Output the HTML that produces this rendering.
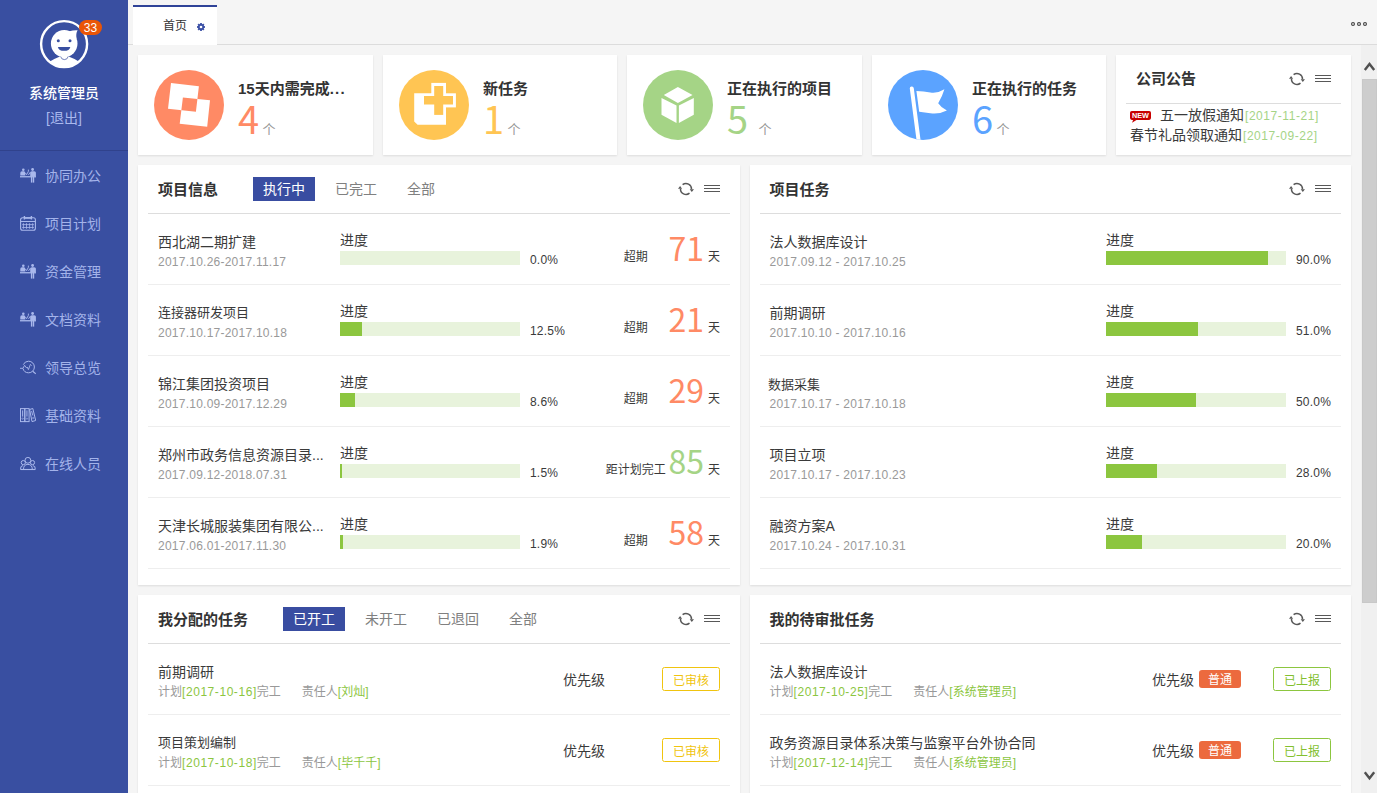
<!DOCTYPE html>
<html lang="zh-CN">
<head>
<meta charset="utf-8">
<title>首页</title>
<style>
*{box-sizing:border-box;margin:0;padding:0}
html,body{width:1377px;height:793px;overflow:hidden}
body{position:relative;background:#f5f5f5;font-family:"Liberation Sans","Noto Sans CJK SC",sans-serif;font-size:14px;color:#333;line-height:1}
.abs{position:absolute}
/* sidebar */
#side{position:absolute;left:0;top:0;width:128px;height:793px;background:#394fa1;color:#fff}
#side .uname{position:absolute;left:0;width:128px;top:83px;text-align:center;font-size:14px;line-height:20px;font-weight:500;color:#fff}
#side .logout{position:absolute;left:0;width:128px;top:108px;text-align:center;font-size:14px;line-height:20px;color:#a9b9ee}
#side .hr{position:absolute;left:0;top:150px;width:128px;height:1px;background:#30428c}
#side .mi{position:absolute;left:0;width:128px;height:48px;color:#a3b3ea;font-size:14px;line-height:48px;padding-left:45px}
#side .mi svg{position:absolute;left:20px;top:16px}
.badge{position:absolute;left:79px;top:20px;width:23px;height:15px;border-radius:8px;background:#ea5506;color:#fff;font-size:12px;line-height:17px;text-align:center}
/* top tab bar */
#tabbar{position:absolute;left:128px;top:0;width:1249px;height:45px;border-bottom:1px solid #dcdcdc;background:#f5f5f5}
#tab{position:absolute;left:133px;top:5px;width:84px;height:40px;background:#fff;border-top:2px solid #2f4398}
#tab span{position:absolute;left:30px;top:12px;font-size:12px;line-height:14px;color:#333}
/* cards */
.card{position:absolute;top:55px;height:100px;background:#fff;box-shadow:0 1px 2px rgba(0,0,0,.1)}
.card .ico{position:absolute;left:16px;top:15px;width:70px;height:70px}
.card .t{position:absolute;left:100px;top:24px;font-size:15px;line-height:20px;font-weight:bold;color:#333;white-space:nowrap}
.card .n{position:absolute;left:100px;top:41px;font-family:"Noto Sans CJK SC","Liberation Sans",sans-serif;font-weight:400;font-size:38px;line-height:44px}
.card .u{position:absolute;top:68px;font-size:13px;line-height:14px;color:#999}
/* panels */
.panel{position:absolute;background:#fff;box-shadow:0 1px 2px rgba(0,0,0,.1)}
.panel .hd{position:absolute;left:10px;right:10px;top:0;height:49px;border-bottom:1px solid #ddd}
.panel .hd .tt{position:absolute;left:10px;top:15px;font-size:15px;line-height:20px;font-weight:bold;color:#333;white-space:nowrap}
.tabs{position:absolute;top:12px;height:24px;white-space:nowrap;font-size:0}
.tabs span{display:inline-block;height:24px;line-height:24px;padding:0 10px;margin-right:10px;font-size:14px;color:#808080}
.tabs span.on{background:#394da1;color:#fff}
.tools{position:absolute;right:10px;top:16px;width:44px;height:16px}
.row{position:absolute;left:10px;right:10px;height:71px;border-bottom:1px solid #eee}
.row .nm{position:absolute;left:10px;top:18px;font-size:14px;line-height:20px;color:#3a3a3a;white-space:nowrap}
.row .dt{position:absolute;left:10px;top:40px;font-size:12px;line-height:16px;color:#999;white-space:nowrap;letter-spacing:.24px}
.row .jd{position:absolute;top:16px;font-size:14px;line-height:20px;color:#3a3a3a}
.row .bar{position:absolute;top:37px;width:180px;height:14px;background:#e8f3dc}
.row .bar i{display:block;height:14px;background:#8cc63f}
.row .pc{position:absolute;top:38px;font-size:12px;line-height:16px;color:#3a3a3a;letter-spacing:.2px}
.row .st{position:absolute;left:437.3px;width:101px;text-align:center;top:35px;font-size:12px;line-height:16px;color:#3a3a3a;white-space:nowrap}
.row .dn{position:absolute;right:26px;top:13px;font-family:"Noto Sans CJK SC","Liberation Sans",sans-serif;font-weight:400;font-size:32px;line-height:40px;text-align:right}
.row .dy{position:absolute;right:10px;top:35px;font-size:12px;line-height:16px;color:#3a3a3a}
.row .sub{position:absolute;left:10px;top:40px;font-size:12px;line-height:16px;color:#999;white-space:nowrap}
.row .sub b{font-weight:normal;color:#8cc63f}
.row .sub b.d{letter-spacing:.56px}
.row .sub em{font-style:normal;margin-left:21px}
.row .pr{position:absolute;top:26px;font-size:14px;line-height:20px;color:#3a3a3a}
.row .btn{position:absolute;right:10px;top:23px;width:58px;height:24px;border:1px solid #f0c40f;border-radius:2.5px;color:#f0c40f;font-size:12px;line-height:22px;padding-top:1.5px;text-align:center}
.row .btn.g{border-color:#8cc63f;color:#83c02f}
.row .tag{position:absolute;top:26px;width:42px;height:18px;background:#ec6a3e;border-radius:3px;color:#fff;font-size:12px;line-height:18px;padding-top:1px;text-align:center}
.orange{color:#ff8a65}.green{color:#a5d486}.yellow{color:#ffc553}.blue{color:#5ba3ff}
.nt{position:absolute;font-size:14px;line-height:20px;color:#3a3a3a;white-space:nowrap}
.nt b{font-weight:normal;color:#a5d486;font-size:12px;letter-spacing:.55px;margin-left:1px}
.rp .nm,.rp .dt,.rp .sub,.rp .tt{margin-left:-.5px}
/* scrollbar */
#sb{position:absolute;left:1361px;top:45px;width:16px;height:748px;background:#f0f0f0}
#sb .th{position:absolute;left:1px;top:34px;width:15px;height:524px;background:#cdcdcd;border:1px solid #c8c8c8}
</style>
</head>
<body>

<div id="side">
  <svg class="abs" style="left:38px;top:18px" width="52" height="52" viewBox="38 18 52 52">
    <defs><clipPath id="cav"><circle cx="64.1" cy="44.1" r="22.5"/></clipPath></defs>
    <circle cx="64.1" cy="44.1" r="23" fill="none" stroke="#fff" stroke-width="2.4"/>
    <g clip-path="url(#cav)" fill="#fff">
      <ellipse cx="64.2" cy="43.6" rx="13.3" ry="13.5"/>
      <path d="M68.5,31.5 Q74,30 77.6,30.3 Q75.6,33.5 76.6,39 Z"/>
      <path d="M49,62 Q56,58 60.5,56.3 L68,56.3 Q73,58 79.5,62 L79.5,70 L49,70 Z"/>
    </g>
    <circle cx="58.3" cy="40.8" r="1.5" fill="#394fa1"/>
    <circle cx="70" cy="40.8" r="1.5" fill="#394fa1"/>
    <path d="M57.9,46.9 L70.3,46.9 Q69.5,50.8 64.1,50.8 Q58.7,50.8 57.9,46.9 Z" fill="#394fa1"/>
    <path d="M60.7,56.6 Q61.3,59.6 64.4,59.6 Q67.5,59.6 68.1,56.6" fill="none" stroke="#394fa1" stroke-width=".7"/>
  </svg>
  <div class="badge">33</div>
  <div class="uname">系统管理员</div>
  <div class="logout">[退出]</div>
  <div class="hr"></div>
  <div class="mi" style="top:152px"><svg width="16" height="16" viewBox="0 0 16 16" fill="#a9b8ec"><circle cx="3.3" cy="1.7" r="1.3"/><path d="M.3,7.6V5.1Q.3,3.2 2,3.2H3.8Q5.3,3.2 5.3,5.1V7.6Z"/><rect x="0" y="8.1" width="16" height="1.3"/><circle cx="12.6" cy="1.5" r="1.4"/><path d="M10.2,8.2V4.8Q10.2,3.2 11.8,3.2H14.2Q15.9,3.2 15.9,4.8V8.2Z"/><rect x="10.9" y="8" width="1.4" height="6.6"/><rect x="12.8" y="8" width="1.4" height="6.6"/><path d="M5.3,4.9L6.6,6.7 8.4,3.3V1.6M8.5,6.9L10.3,4.2" fill="none" stroke="#a9b8ec" stroke-width=".9"/></svg>协同办公</div>
  <div class="mi" style="top:200px"><svg width="16" height="16" viewBox="0 0 16 16" fill="none" stroke="#a9b8ec"><rect x=".6" y="1.7" width="14.8" height="12.6" rx="2" stroke-width="1.1"/><path d="M.6,5.5H15.4" stroke-width="1"/><path d="M4.4,2H11.4" stroke-width="1.6"/><path d="M4.4,0V3.6M11.4,0V3.6" stroke-width="1.4"/><path d="M3.4,7.2V12.8M6.5,7.2V12.8M9.6,7.2V12.8M12.7,7.2V12.8M2.2,8.6H13.9M2.2,11.5H13.9" stroke-width=".8"/></svg>项目计划</div>
  <div class="mi" style="top:248px"><svg width="16" height="16" viewBox="0 0 16 16" fill="#a9b8ec"><circle cx="3.3" cy="1.7" r="1.3"/><path d="M.3,7.6V5.1Q.3,3.2 2,3.2H3.8Q5.3,3.2 5.3,5.1V7.6Z"/><rect x="0" y="8.1" width="16" height="1.3"/><circle cx="12.6" cy="1.5" r="1.4"/><path d="M10.2,8.2V4.8Q10.2,3.2 11.8,3.2H14.2Q15.9,3.2 15.9,4.8V8.2Z"/><rect x="10.9" y="8" width="1.4" height="6.6"/><rect x="12.8" y="8" width="1.4" height="6.6"/><path d="M5.3,4.9L6.6,6.7 8.4,3.3V1.6M8.5,6.9L10.3,4.2" fill="none" stroke="#a9b8ec" stroke-width=".9"/></svg>资金管理</div>
  <div class="mi" style="top:296px"><svg width="16" height="16" viewBox="0 0 16 16" fill="#a9b8ec"><circle cx="3.3" cy="1.7" r="1.3"/><path d="M.3,7.6V5.1Q.3,3.2 2,3.2H3.8Q5.3,3.2 5.3,5.1V7.6Z"/><rect x="0" y="8.1" width="16" height="1.3"/><circle cx="12.6" cy="1.5" r="1.4"/><path d="M10.2,8.2V4.8Q10.2,3.2 11.8,3.2H14.2Q15.9,3.2 15.9,4.8V8.2Z"/><rect x="10.9" y="8" width="1.4" height="6.6"/><rect x="12.8" y="8" width="1.4" height="6.6"/><path d="M5.3,4.9L6.6,6.7 8.4,3.3V1.6M8.5,6.9L10.3,4.2" fill="none" stroke="#a9b8ec" stroke-width=".9"/></svg>文档资料</div>
  <div class="mi" style="top:344px"><svg width="16" height="16" viewBox="0 0 16 16" fill="none" stroke="#a9b8ec"><circle cx="8.6" cy="7" r="5.8" stroke-width="1" stroke-dasharray="16.2 4 16.3 0"/><path d="M12.7,11.3L15.8,13.8" stroke-width="1.2"/><path d="M0,8.3H3L4.6,5.3 6.4,7.8 7.2,7 8.4,9.6 10.4,4.4 11.6,5.6" stroke-width=".9"/></svg>领导总览</div>
  <div class="mi" style="top:392px"><svg width="16" height="16" viewBox="0 0 16 16" fill="none" stroke="#a9b8ec"><rect x=".5" y=".6" width="4.3" height="13" stroke-width="1"/><rect x="4.8" y=".6" width="4.3" height="13" stroke-width="1"/><path d="M2.65,2.4V8.6M6.95,2.4V8.6" stroke-width="1"/><circle cx="2.65" cy="10.6" r=".7" stroke-width=".6"/><circle cx="6.95" cy="10.6" r=".7" stroke-width=".6"/><path d="M9.6,1.5L12.8,.5 15.7,12.5 12,13.6Z" stroke-width="1"/><path d="M11.6,3L12.8,7.5" stroke-width=".9"/><circle cx="13.2" cy="10" r=".7" stroke-width=".6"/></svg>基础资料</div>
  <div class="mi" style="top:440px"><svg width="16" height="16" viewBox="0 0 16 16" fill="none" stroke="#a9b8ec" stroke-width="1"><circle cx="7.9" cy="4.3" r="2.9"/><circle cx="3.3" cy="6.6" r="2.1"/><circle cx="12.5" cy="6.6" r="2.1"/><path d="M3.5,13.4Q3.5,8.4 7.9,8.4 12.3,8.4 12.3,13.4"/><path d="M.5,13.4Q.2,9.8 3,9.5M15.3,13.4Q15.6,9.8 12.8,9.5"/><path d="M.5,13.5H15.3" stroke-width="1.1"/></svg>在线人员</div>
</div>

<div id="tabbar"></div>
<div id="tab"><span>首页</span><svg class="abs" style="left:63px;top:15px" width="10" height="10" viewBox="-5 -5 10 10"><g fill="#3b50a6"><circle r="3"/><g id="gt"><rect x="-.9" y="-4" width="1.8" height="8"/></g><use href="#gt" transform="rotate(45)"/><use href="#gt" transform="rotate(90)"/><use href="#gt" transform="rotate(135)"/></g><circle r="1.3" fill="#fff"/></svg></div>
<svg class="abs" style="left:1350px;top:20px" width="19" height="8" viewBox="0 0 19 8" fill="#dcdcdc" stroke="#444" stroke-width="1.1"><circle cx="3" cy="4" r="1.45"/><circle cx="9" cy="4" r="1.45"/><circle cx="15" cy="4" r="1.45"/></svg>

<div class="card" style="left:138px;width:235px"><svg class="ico" viewBox="154 70 70 70"><circle cx="189" cy="105" r="35" fill="#ff8a65"/><path fill="#fff" fill-rule="evenodd" d="M171,83.1L198.9,86.2 195.9,111.8 168,108.7ZM182.9,97.6L210,100.2 207.2,126.8 179.7,123.7Z"/></svg><div class="t">15天内需完成<span style="letter-spacing:1.2px">...</span></div><div class="n orange">4</div><div class="u" style="left:124.5px">个</div></div>
<div class="card" style="left:383px;width:234px"><svg class="ico" viewBox="399 70 70 70"><circle cx="434" cy="105" r="35" fill="#ffc553"/><path fill="#fff" d="M414.2,93.3H446V124.8H417.6L414.2,121.4Z"/><rect x="431.3" y="82.9" width="14.7" height="30" fill="#fff"/><rect x="431.3" y="93.3" width="24.6" height="14.1" fill="#fff"/><rect x="434.2" y="86" width="9" height="28.9" fill="#ffc553"/><rect x="424" y="96" width="29" height="8.5" fill="#ffc553"/></svg><div class="t">新任务</div><div class="n yellow">1</div><div class="u" style="left:124.5px">个</div></div>
<div class="card" style="left:627px;width:235px"><svg class="ico" viewBox="643.3 70 70 70"><circle cx="678.3" cy="105" r="35" fill="#a5d486"/><g fill="#fff"><path d="M678.2,87L692.8,95 678.2,103.1 664.1,95Z"/><path d="M661.8,97.9L676.8,105.4V122.9L661.8,114.7Z"/><path d="M694.1,97.9L679.2,105.4V122.9L694.1,114.7Z"/></g></svg><div class="t">正在执行的项目</div><div class="n green">5</div><div class="u" style="left:131.4px">个</div></div>
<div class="card" style="left:872px;width:234px"><svg class="ico" viewBox="888.2 70 70 70"><defs><clipPath id="cfl"><circle cx="923.2" cy="105" r="35"/></clipPath></defs><circle cx="923.2" cy="105" r="35" fill="#5ba3ff"/><g clip-path="url(#cfl)"><path d="M912,88.4L919,142" fill="none" stroke="#fff" stroke-width="4" stroke-linecap="round"/><path fill="#fff" d="M916.6,91.1Q924,91.3 930.6,92.5Q938,93.6 944.6,89.3Q942.5,96.5 938.4,103.3Q941.5,108 947.1,110.5Q939,114.6 930.6,113.3Q925,112.3 919.4,111.8Z"/></g></svg><div class="t">正在执行的任务</div><div class="n blue">6</div><div class="u" style="left:124.6px">个</div></div>
<div class="card" style="left:1116px;width:235px"><div class="t" style="left:20px;top:14px">公司公告</div><svg class="tools" style="right:20px;top:16px" viewBox="0 0 44 16" fill="none" stroke="#585858"><path d="M6.6,3.7A5.5,5.5 0 0 1 15.5,8.3M13.5,12.2A5.5,5.5 0 0 1 4.5,7.7" stroke-width="1.5"/><path d="M13.7,8.2H18L15.8,10.9ZM2,7.7H6.1L4.1,4.9Z" fill="#585858" stroke="none"/><path d="M28,4.5H44M28,7.5H44M28,10.5H44" stroke-width="1.1"/></svg>
<div class="abs" style="left:10px;right:10px;top:48px;height:1px;background:#ddd"></div><svg class="abs" style="left:13px;top:55px" width="23" height="14" viewBox="0 0 23 14"><rect x="1" y=".9" width="21" height="9" rx="1.8" fill="#c80000"/><path d="M4.3,9.5L3,12.8 8.3,9.5Z" fill="#c80000"/><text x="11.5" y="7.9" font-family="Liberation Sans,sans-serif" font-weight="bold" font-size="6.8" fill="#fff" text-anchor="middle" textLength="17" lengthAdjust="spacingAndGlyphs">NEW</text></svg>
<div class="nt" style="left:44px;top:50px">五一放假通知<b>[2017-11-21]</b></div><div class="nt" style="left:14px;top:70px">春节礼品领取通知<b>[2017-09-22]</b></div></div>
<div class="panel" style="left:138px;top:165px;width:602px;height:420px"><div class="hd"><div class="tt">项目信息</div><div class="tabs" style="left:105px"><span class="on">执行中</span><span>已完工</span><span>全部</span></div><svg class="tools" viewBox="0 0 44 16" fill="none" stroke="#585858"><path d="M6.6,3.7A5.5,5.5 0 0 1 15.5,8.3M13.5,12.2A5.5,5.5 0 0 1 4.5,7.7" stroke-width="1.5"/><path d="M13.7,8.2H18L15.8,10.9ZM2,7.7H6.1L4.1,4.9Z" fill="#585858" stroke="none"/><path d="M28,4.5H44M28,7.5H44M28,10.5H44" stroke-width="1.1"/></svg></div>
<div class="row" style="top:49px"><div class="nm">西北湖二期扩建</div><div class="dt">2017.10.26-2017.11.17</div><div class="jd" style="left:192px">进度</div><div class="bar" style="left:192px"><i style="width:0px"></i></div><div class="pc" style="left:382px">0.0%</div><div class="st">超期</div><div class="dn orange">71</div><div class="dy">天</div></div>
<div class="row" style="top:120px"><div class="nm" style="font-size:13px">连接器研发项目</div><div class="dt">2017.10.17-2017.10.18</div><div class="jd" style="left:192px">进度</div><div class="bar" style="left:192px"><i style="width:22px"></i></div><div class="pc" style="left:382px">12.5%</div><div class="st">超期</div><div class="dn orange">21</div><div class="dy">天</div></div>
<div class="row" style="top:191px"><div class="nm">锦江集团投资项目</div><div class="dt">2017.10.09-2017.12.29</div><div class="jd" style="left:192px">进度</div><div class="bar" style="left:192px"><i style="width:15px"></i></div><div class="pc" style="left:382px">8.6%</div><div class="st">超期</div><div class="dn orange">29</div><div class="dy">天</div></div>
<div class="row" style="top:262px"><div class="nm">郑州市政务信息资源目录...</div><div class="dt">2017.09.12-2018.07.31</div><div class="jd" style="left:192px">进度</div><div class="bar" style="left:192px"><i style="width:2px"></i></div><div class="pc" style="left:382px">1.5%</div><div class="st">距计划完工</div><div class="dn green">85</div><div class="dy">天</div></div>
<div class="row" style="top:333px"><div class="nm">天津长城服装集团有限公...</div><div class="dt">2017.06.01-2017.11.30</div><div class="jd" style="left:192px">进度</div><div class="bar" style="left:192px"><i style="width:3px"></i></div><div class="pc" style="left:382px">1.9%</div><div class="st">超期</div><div class="dn orange">58</div><div class="dy">天</div></div>
</div>
<div class="panel rp" style="left:750px;top:165px;width:601px;height:420px"><div class="hd"><div class="tt">项目任务</div><svg class="tools" viewBox="0 0 44 16" fill="none" stroke="#585858"><path d="M6.6,3.7A5.5,5.5 0 0 1 15.5,8.3M13.5,12.2A5.5,5.5 0 0 1 4.5,7.7" stroke-width="1.5"/><path d="M13.7,8.2H18L15.8,10.9ZM2,7.7H6.1L4.1,4.9Z" fill="#585858" stroke="none"/><path d="M28,4.5H44M28,7.5H44M28,10.5H44" stroke-width="1.1"/></svg></div>
<div class="row" style="top:49px"><div class="nm">法人数据库设计</div><div class="dt">2017.09.12 - 2017.10.25</div><div class="jd" style="left:346px">进度</div><div class="bar" style="left:346px"><i style="width:162px"></i></div><div class="pc" style="left:536px">90.0%</div></div>
<div class="row" style="top:120px"><div class="nm">前期调研</div><div class="dt">2017.10.10 - 2017.10.16</div><div class="jd" style="left:346px">进度</div><div class="bar" style="left:346px"><i style="width:92px"></i></div><div class="pc" style="left:536px">51.0%</div></div>
<div class="row" style="top:191px"><div class="nm" style="margin-left:-2px;font-size:13px;top:19px">数据采集</div><div class="dt">2017.10.17 - 2017.10.18</div><div class="jd" style="left:346px">进度</div><div class="bar" style="left:346px"><i style="width:90px"></i></div><div class="pc" style="left:536px">50.0%</div></div>
<div class="row" style="top:262px"><div class="nm">项目立项</div><div class="dt">2017.10.17 - 2017.10.23</div><div class="jd" style="left:346px">进度</div><div class="bar" style="left:346px"><i style="width:51px"></i></div><div class="pc" style="left:536px">28.0%</div></div>
<div class="row" style="top:333px"><div class="nm">融资方案A</div><div class="dt">2017.10.24 - 2017.10.31</div><div class="jd" style="left:346px">进度</div><div class="bar" style="left:346px"><i style="width:36px"></i></div><div class="pc" style="left:536px">20.0%</div></div>
</div>
<div class="panel" style="left:138px;top:595px;width:602px;height:420px"><div class="hd"><div class="tt">我分配的任务</div><div class="tabs" style="left:135px"><span class="on">已开工</span><span>未开工</span><span>已退回</span><span>全部</span></div><svg class="tools" viewBox="0 0 44 16" fill="none" stroke="#585858"><path d="M6.6,3.7A5.5,5.5 0 0 1 15.5,8.3M13.5,12.2A5.5,5.5 0 0 1 4.5,7.7" stroke-width="1.5"/><path d="M13.7,8.2H18L15.8,10.9ZM2,7.7H6.1L4.1,4.9Z" fill="#585858" stroke="none"/><path d="M28,4.5H44M28,7.5H44M28,10.5H44" stroke-width="1.1"/></svg></div>
<div class="row" style="top:49px"><div class="nm">前期调研</div><div class="sub">计划<b class="d">[2017-10-16]</b>完工<em>责任人<b>[刘灿]</b></em></div><div class="pr" style="left:415px">优先级</div><div class="btn">已审核</div></div>
<div class="row" style="top:120px"><div class="nm" style="font-size:13px">项目策划编制</div><div class="sub">计划<b class="d">[2017-10-18]</b>完工<em>责任人<b>[毕千千]</b></em></div><div class="pr" style="left:415px">优先级</div><div class="btn">已审核</div></div>
<div class="row" style="top:191px"><div class="nm">数据采集</div><div class="sub">计划<b class="d">[2017-10-18]</b>完工<em>责任人<b>[刘灿]</b></em></div><div class="pr" style="left:415px">优先级</div><div class="btn">已审核</div></div>
</div>
<div class="panel rp" style="left:750px;top:595px;width:601px;height:420px"><div class="hd"><div class="tt">我的待审批任务</div><svg class="tools" viewBox="0 0 44 16" fill="none" stroke="#585858"><path d="M6.6,3.7A5.5,5.5 0 0 1 15.5,8.3M13.5,12.2A5.5,5.5 0 0 1 4.5,7.7" stroke-width="1.5"/><path d="M13.7,8.2H18L15.8,10.9ZM2,7.7H6.1L4.1,4.9Z" fill="#585858" stroke="none"/><path d="M28,4.5H44M28,7.5H44M28,10.5H44" stroke-width="1.1"/></svg></div>
<div class="row" style="top:49px"><div class="nm">法人数据库设计</div><div class="sub">计划<b class="d">[2017-10-25]</b>完工<em>责任人<b>[系统管理员]</b></em></div><div class="pr" style="left:392px">优先级</div><div class="tag" style="left:439px">普通</div><div class="btn g">已上报</div></div>
<div class="row" style="top:120px"><div class="nm">政务资源目录体系决策与监察平台外协合同</div><div class="sub">计划<b class="d">[2017-12-14]</b>完工<em>责任人<b>[系统管理员]</b></em></div><div class="pr" style="left:392px">优先级</div><div class="tag" style="left:439px">普通</div><div class="btn g">已上报</div></div>
<div class="row" style="top:191px"><div class="nm">数据采集</div><div class="sub">计划<b class="d">[2017-10-18]</b>完工<em>责任人<b>[系统管理员]</b></em></div><div class="pr" style="left:392px">优先级</div><div class="tag" style="left:439px">普通</div><div class="btn g">已上报</div></div>
</div>
<div id="sb"><div class="th"></div><svg class="abs" style="left:1px;top:0" width="15" height="748" viewBox="0 0 15 748" fill="none" stroke="#505050" stroke-width="2.4"><path d="M2.8,25L7.5,18.9 12.2,25"/><path d="M2.8,727.2L7.5,733.3 12.2,727.2"/></svg></div>

</body>
</html>
